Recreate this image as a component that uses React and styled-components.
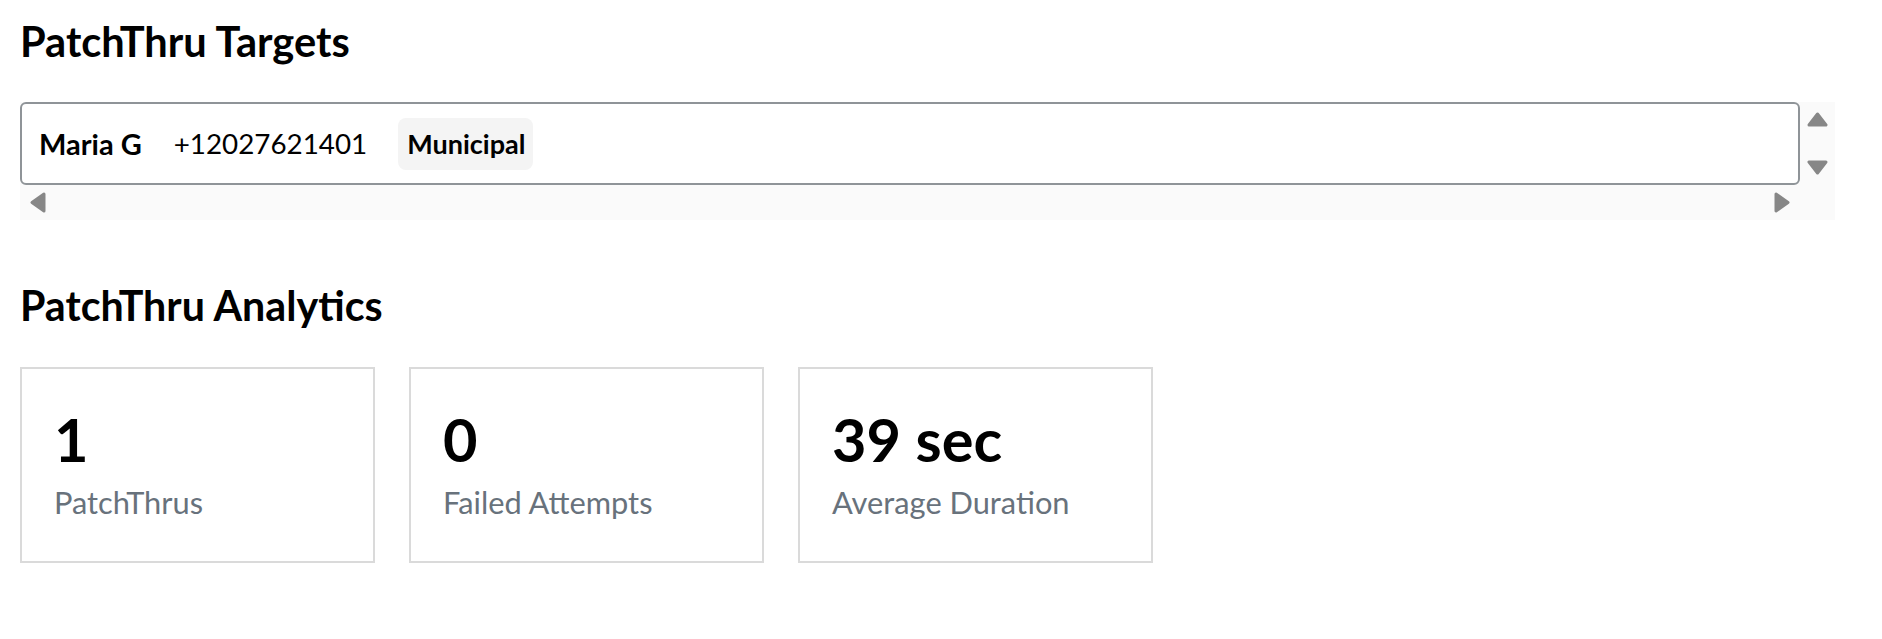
import React from 'react';
import styled, { createGlobalStyle } from 'styled-components';

const Global = createGlobalStyle`
  body {
    margin: 0;
    background: #fff;
    font-family: Lato, "Noto Sans", sans-serif;
    color: #000;
  }
`;

const Page = styled.div`
  padding: 17px 0 0 20px;
`;

const Heading = styled.h2`
  margin: 0;
  font-size: 41.6px;
  line-height: 49px;
  font-weight: 700;
`;

const ScrollFrame = styled.div`
  display: grid;
  grid-template-columns: 1fr 35px;
  grid-template-rows: 83px 35px;
  width: 1815px;
  margin: 36px 0 0;
  background: #fafafa;
`;

const TargetBox = styled.div`
  display: flex;
  align-items: center;
  box-sizing: border-box;
  padding-left: 17px;
  background: #fff;
  border: 2px solid #8f9498;
  border-radius: 6px;
`;

const Name = styled.span`
  font-size: 29px;
  line-height: 52px;
  font-weight: 700;
  margin-right: 32px;
`;

const Phone = styled.span`
  font-size: 27.8px;
  line-height: 52px;
  margin-right: 31px;
`;

const Badge = styled.span`
  padding: 0 8px 0 9px;
  font-size: 27px;
  line-height: 52px;
  font-weight: 700;
  background: #f4f4f4;
  border-radius: 8px;
`;

const VTrack = styled.div`
  display: flex;
  flex-direction: column;
  justify-content: space-between;
  align-items: center;
  padding: 10px 0;
`;

const HTrack = styled.div`
  display: flex;
  justify-content: space-between;
  align-items: center;
  padding: 0 10px;
`;

const Arrow = styled.svg`
  display: block;
  fill: #878787;
  stroke: #878787;
  stroke-width: 3;
  stroke-linejoin: round;
`;

const AnalyticsHeading = styled(Heading)`
  margin-top: 61px;
  font-size: 41.2px;
`;

const Cards = styled.div`
  display: flex;
  gap: 34px;
  margin-top: 37px;
`;

const Card = styled.div`
  box-sizing: border-box;
  width: 355px;
  height: 196px;
  padding: 35px 32px 0;
  border: 2px solid #dadada;
`;

const Value = styled.div`
  font-size: 59.5px;
  line-height: 71px;
  font-weight: 700;
`;

const Label = styled.div`
  margin-top: 9px;
  font-size: 30.8px;
  line-height: 37px;
  color: #68727c;
`;

const UpArrow = () => (
  <Arrow width="21" height="15" viewBox="0 0 21 15">
    <polygon points="10.5,2 19,13 2,13" />
  </Arrow>
);

const DownArrow = () => (
  <Arrow width="21" height="15" viewBox="0 0 21 15">
    <polygon points="2,2 19,2 10.5,13" />
  </Arrow>
);

const LeftArrow = () => (
  <Arrow width="16" height="21" viewBox="0 0 16 21">
    <polygon points="2,10.5 14,2 14,19" />
  </Arrow>
);

const RightArrow = () => (
  <Arrow width="16" height="21" viewBox="0 0 16 21">
    <polygon points="2,2 14,10.5 2,19" />
  </Arrow>
);

const stats = [
  { value: '1', label: 'PatchThrus' },
  { value: '0', label: 'Failed Attempts' },
  { value: '39 sec', label: 'Average Duration' },
];

export default function App() {
  return (
    <>
      <Global />
      <Page>
        <Heading>PatchThru Targets</Heading>
        <ScrollFrame>
          <TargetBox>
            <Name>Maria G</Name>
            <Phone>+12027621401</Phone>
            <Badge>Municipal</Badge>
          </TargetBox>
          <VTrack>
            <UpArrow />
            <DownArrow />
          </VTrack>
          <HTrack>
            <LeftArrow />
            <RightArrow />
          </HTrack>
          <div />
        </ScrollFrame>

        <AnalyticsHeading>PatchThru Analytics</AnalyticsHeading>
        <Cards>
          {stats.map((s) => (
            <Card key={s.label}>
              <Value>{s.value}</Value>
              <Label>{s.label}</Label>
            </Card>
          ))}
        </Cards>
      </Page>
    </>
  );
}
